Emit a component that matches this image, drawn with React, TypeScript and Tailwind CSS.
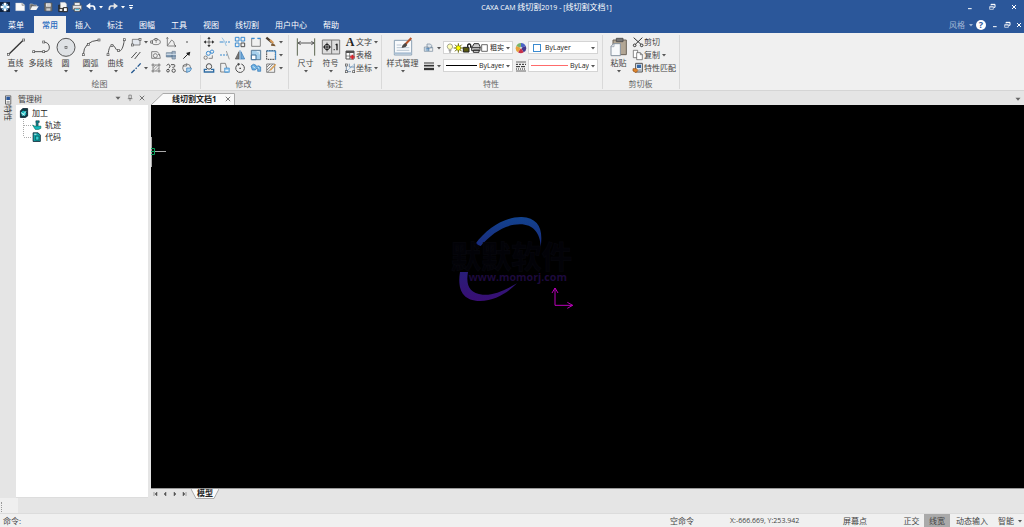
import type { ReactNode } from "react";

type IconProps = { children: ReactNode; className?: string };

// small ribbon icons, drawn on a 36 unit grid
function Icon({ children, className = "size-3" }: IconProps) {
  return (
    <svg
      viewBox="0 0 36 36"
      fill="none"
      stroke="#505050"
      strokeWidth="3"
      className={`shrink-0 ${className}`}
    >
      {children}
    </svg>
  );
}

// large ribbon icons, drawn on a 60 unit grid
function BigIcon({ children }: { children: ReactNode }) {
  return (
    <svg
      viewBox="0 0 60 60"
      fill="none"
      stroke="#555"
      strokeWidth="3"
      className="size-5 shrink-0"
    >
      {children}
    </svg>
  );
}

function Arrow({ className = "fill-[#555]" }: { className?: string }) {
  return (
    <svg viewBox="0 0 8 8" className={`size-2 shrink-0 ${className}`}>
      <path d="M2 3h4L4 5.4z" />
    </svg>
  );
}

function BigButton({
  label,
  icon,
  arrow = true,
  className = "w-[25px]",
}: {
  label: string;
  icon: ReactNode;
  arrow?: boolean;
  className?: string;
}) {
  return (
    <button
      className={`flex shrink-0 flex-col items-center whitespace-nowrap pt-0.5 ${className}`}
    >
      {icon}
      <span className="mt-px leading-[9px]">{label}</span>
      {arrow && <Arrow />}
    </button>
  );
}

function IconButton({ label, children }: { label: string; children: ReactNode }) {
  return (
    <button aria-label={label} className="flex items-center">
      {children}
    </button>
  );
}

function TextButton({
  label,
  icon,
  arrow,
}: {
  label: string;
  icon: ReactNode;
  arrow?: boolean;
}) {
  return (
    <button className="flex items-center whitespace-nowrap">
      {icon}
      <span>{label}</span>
      {arrow && <Arrow />}
    </button>
  );
}

function Group({
  title,
  children,
  className,
}: {
  title: string;
  children: ReactNode;
  className: string;
}) {
  return (
    <section
      className={`mb-px mt-0.5 flex shrink-0 flex-col justify-between border-r border-[#d9d9d9] ${className}`}
    >
      <div className="flex items-start">{children}</div>
      <h2 className="pr-1 text-center leading-[11px] text-[#666]">{title}</h2>
    </section>
  );
}

function Combo({
  label,
  value,
  children,
}: {
  label: string;
  value: string;
  children: ReactNode;
}) {
  return (
    <div className="flex h-[13px] w-[70px] items-center border border-[#d4d4d4] bg-white pl-0.5">
      {children}
      <select
        aria-label={label}
        className="ml-0.5 min-w-0 flex-1 appearance-none overflow-hidden bg-transparent text-[7px] leading-[10px] text-[#222]"
      >
        <option>{value}</option>
      </select>
      <Arrow />
    </div>
  );
}

const node = (x: number, y: number) => (
  <rect x={x - 3} y={y - 3} width="6" height="6" strokeWidth="2" fill="#f0f0f0" />
);

function TitleBar() {
  return (
    <header className="flex h-4 items-center bg-[#2b579a] pb-[3px] text-white">
      <div className="flex flex-1 items-center">
        <svg viewBox="0 0 30 30" className="size-2.5">
          <rect width="30" height="30" fill="#0d2140" />
          <path d="M15 2v26M2 15h26" stroke="#fff" strokeWidth="8" />
          <path d="M7 7l16 16M23 7L7 23" stroke="#8fc7ea" strokeWidth="4" />
        </svg>
        <IconButton label="新建">
          <Icon className="ml-1 size-3">
            <path d="M5 6h20l7 6v17H5z" fill="#fafafa" stroke="#ccc" strokeWidth="1" />
            <path d="M24 6v7h8" fill="#ccc" stroke="#888" strokeWidth="2" />
          </Icon>
        </IconButton>
        <IconButton label="打开">
          <Icon className="ml-0.5 size-3">
            <path d="M6 26V9h8l3 3h9v4" stroke="#bbb" strokeWidth="2" fill="#666" />
            <path d="M7 27l5-11h20l-7 11z" fill="#f2f2f2" stroke="none" />
          </Icon>
        </IconButton>
        <IconButton label="保存">
          <Icon className="ml-0.5 size-3">
            <path d="M8 6h22v24H8z" fill="#777" stroke="#555" strokeWidth="2" />
            <path d="M12 7h14v10H12z" fill="#eee" stroke="none" />
            <path d="M13 22h12v7H13z" fill="#ccc" stroke="none" />
            <path d="M14 12h10" stroke="#999" strokeWidth="2" />
          </Icon>
        </IconButton>
        <IconButton label="另存为">
          <Icon className="ml-[3px] size-3">
            <path d="M5 12h19v20H5z" fill="#333" stroke="#222" strokeWidth="2" />
            <path d="M10 4h14l5 5v12H10z" fill="#f4f4f4" stroke="#999" strokeWidth="1" />
            <path d="M8 24h8v6H8z" fill="#ddd" stroke="none" />
            <path d="M19 20h12v12H19z" fill="#fff" stroke="#222" strokeWidth="3" />
          </Icon>
        </IconButton>
        <IconButton label="打印">
          <Icon className="ml-0.5 size-3">
            <path d="M10 5h17v9H10z" fill="#fff" stroke="#555" strokeWidth="2" />
            <path d="M5 13h27v13H5z" fill="#e8e8e8" stroke="#555" strokeWidth="2" />
            <path d="M10 22h17v9H10z" fill="#fff" stroke="#333" strokeWidth="2" />
            <path d="M13 26h11" stroke="#2fb1d6" />
          </Icon>
        </IconButton>
        <IconButton label="撤销">
          <Icon className="ml-0.5 size-3">
            <path d="M13 15h11q6 1 5 12" stroke="#fff" strokeWidth="5" />
            <path d="M3 15L16 5v20z" fill="#fff" stroke="none" />
          </Icon>
          <Arrow className="fill-white" />
        </IconButton>
        <IconButton label="重做">
          <Icon className="ml-0.5 size-3">
            <path d="M22 15H12q-6 1-5 12" stroke="#e6e6e6" strokeWidth="5" />
            <path d="M33 15L20 5v20z" fill="#e6e6e6" stroke="none" />
          </Icon>
          <Arrow className="fill-white" />
        </IconButton>
        <IconButton label="自定义快速访问工具栏">
          <svg viewBox="0 0 8 8" className="size-2 fill-white">
            <path d="M2 2h4v1H2zM2 4h4L4 6.4z" />
          </svg>
        </IconButton>
      </div>
      <h1 className="whitespace-nowrap pl-[74px] pt-px text-center text-[7px]">
        CAXA CAM <span className="text-[8px]">线切割</span>2019 - [
        <span className="text-[8px]">线切割文档</span>1]
      </h1>
      <div className="flex flex-1 items-center justify-end gap-3 pr-[5px]">
        <WindowButtons />
      </div>
    </header>
  );
}

function WindowButtons() {
  return (
    <>
      <IconButton label="最小化">
        <svg viewBox="0 0 30 30" className="size-2.5">
          <path d="M9 20h11" stroke="#fff" strokeWidth="3" />
        </svg>
      </IconButton>
      <IconButton label="还原">
        <svg viewBox="0 0 30 30" className="size-2.5" fill="none" stroke="#fff">
          <path d="M12 10V7h12v9h-4M12 8h12" strokeWidth="3" />
          <path d="M8 14h11v8H8zM8 15h11" strokeWidth="2" />
        </svg>
      </IconButton>
      <IconButton label="关闭">
        <svg viewBox="0 0 30 30" className="size-2.5" stroke="#fff">
          <path d="M9 9l12 12M21 9L9 21" strokeWidth="3" />
        </svg>
      </IconButton>
    </>
  );
}

const tabs = ["插入", "标注", "图幅", "工具", "视图", "线切割", "用户中心", "帮助"];

function MenuBar() {
  return (
    <nav className="flex h-[17px] items-stretch bg-[#2b579a] text-white">
      <button className="mr-0.5 px-2">菜单</button>
      <button className="mr-px bg-[#f0f0f0] px-2 font-medium text-[#2b6cc0]">
        常用
      </button>
      {tabs.map((tab) => (
        <button key={tab} className="whitespace-nowrap px-2">
          {tab}
        </button>
      ))}
      <div className="ml-auto flex items-center">
        <button className="flex items-center text-[#a3b7d6]">
          风格
          <span className="ml-0.5">
            <Arrow className="fill-[#a3b7d6]" />
          </span>
        </button>
        <button
          aria-label="帮助"
          className="ml-px mr-1 size-[10px] rounded-full bg-white text-[9px] font-bold leading-[10px] text-[#2b579a]"
        >
          ?
        </button>
        <div className="flex gap-0.5">
          <WindowButtons />
        </div>
      </div>
    </nav>
  );
}

function DrawGroup() {
  return (
    <Group title="绘图" className="w-[201px] pl-[3px]">
      <BigButton
        label="直线"
        icon={
          <BigIcon>
            <path d="M7 53L53 8" strokeWidth="4" stroke="#333" />
            {node(7, 52)}
            {node(53, 9)}
          </BigIcon>
        }
      />
      <BigButton
        label="多段线"
        arrow={false}
        icon={
          <BigIcon>
            <path d="M8 44h34q14-1 13-14T39 15" />
            {node(8, 44)}
            {node(38, 44)}
            {node(38, 15)}
          </BigIcon>
        }
      />
      <BigButton
        label="圆"
        icon={
          <BigIcon>
            <circle cx="30" cy="31" r="27" fill="#dfe2e5" />
            <rect x="27" y="28" width="6" height="6" strokeWidth="2" />
          </BigIcon>
        }
      />
      <BigButton
        label="圆弧"
        icon={
          <BigIcon>
            <path d="M7 53Q8 13 54 9" />
            {node(7, 53)}
            {node(22, 22)}
            {node(54, 9)}
          </BigIcon>
        }
      />
      <BigButton
        label="曲线"
        icon={
          <BigIcon>
            <path d="M6 53C10 20 20 18 28 33s22 16 27-25" />
            {node(6, 53)}
            {node(18, 26)}
            {node(37, 40)}
            {node(55, 8)}
          </BigIcon>
        }
      />
      <div className="ml-0.5 grid h-10 grid-cols-[20px_15px_16px_12px] grid-rows-3 items-center">
        <IconButton label="矩形">
          <Icon>
            <path d="M7 10h23v17H7z" fill="#e4e8ee" strokeWidth="2" />
            {node(7, 27)}
            {node(30, 10)}
          </Icon>
          <Arrow />
        </IconButton>
        <IconButton label="椭圆">
          <Icon>
            <ellipse cx="18" cy="18" rx="13" ry="8" strokeWidth="2" />
            {node(18, 10)}
            {node(5, 18)}
            <path d="M17 18h3" />
          </Icon>
        </IconButton>
        <IconButton label="坐标曲线">
          <Icon>
            <path d="M7 5v25h26M8 28L20 12q8 2 9 16" strokeWidth="2" />
            <path d="M4 8l3-4 3 4M29 27l4 3-4 3" strokeWidth="2" />
          </Icon>
        </IconButton>
        <IconButton label="点">
          <Icon>
            <path d="M16 18h4" strokeWidth="4" />
          </Icon>
        </IconButton>
        <IconButton label="平行线">
          <Icon>
            <path d="M4 27L20 9M14 30L31 9" />
          </Icon>
        </IconButton>
        <IconButton label="等距线">
          <Icon>
            <path d="M5 8h16q10 4 10 20H5z" strokeWidth="2" />
            <circle cx="16" cy="20" r="6" strokeWidth="2" />
            <path d="M24 15l5 5" strokeWidth="2" />
          </Icon>
        </IconButton>
        <IconButton label="孔轴">
          <Icon>
            <path d="M4 11h17v13H4zM21 7h10v23h-10z" fill="#9eb2c6" stroke="#6b7f92" strokeWidth="2" />
            <path d="M4 16h29" stroke="#d4e0ea" />
            <path d="M4 21h29" stroke="#3f668c" strokeWidth="2" />
          </Icon>
        </IconButton>
        <IconButton label="箭头">
          <Icon>
            <path d="M7 29L22 14" stroke="#222" />
            <path d="M28 8l-3 13-10-9z" fill="#222" stroke="none" />
          </Icon>
        </IconButton>
        <IconButton label="中心线">
          <Icon>
            <path d="M4 33l10-10M17 20l3-3M23 14l9-10" stroke="#24588f" strokeWidth="4" />
          </Icon>
          <Arrow />
        </IconButton>
        <IconButton label="剖面线">
          <Icon>
            <path d="M9 4v28M27 4v28M4 9h28M4 27h28" strokeWidth="2" />
            <path
              d="M10 17l7-7M10 25l15-15M18 26l8-8"
              stroke="#777"
              strokeWidth="2"
            />
          </Icon>
        </IconButton>
        <IconButton label="公式曲线">
          <Icon>
            <circle cx="9" cy="26" r="4" />
            <circle cx="26" cy="26" r="5" />
            <path d="M5 11q5-9 9-2t-3 9M18 8h10q5 8-6 8" />
          </Icon>
        </IconButton>
        <IconButton label="局部放大">
          <Icon>
            <circle cx="17" cy="18" r="12" strokeWidth="2" />
            <path d="M17 18h14v3q-2 9-14 10z" fill="#a8d2ee" stroke="#3275b5" strokeWidth="2" />
            <path d="M5 12h12v-7" strokeWidth="2" />
          </Icon>
        </IconButton>
      </div>
    </Group>
  );
}

function ModifyGroup() {
  return (
    <Group title="修改" className="w-[88px] pl-0.5">
      <div className="grid h-10 grid-cols-[16px_15px_16px_15px_20px] grid-rows-3 items-center">
        <IconButton label="平移">
          <Icon>
            <path d="M18 5v26M5 18h26" stroke="#333" strokeWidth="2" />
            <path
              d="M18 2l5 7H13zM18 34l5-7H13zM2 18l7-5v10zM34 18l-7-5v10z"
              fill="#333"
              stroke="none"
            />
          </Icon>
        </IconButton>
        <IconButton label="裁剪">
          <Icon>
            <path d="M2 18h12M20 18h4M27 18h6" stroke="#3b8bd0" />
            <path d="M9 5l8 12 5 13" stroke="#68a9dd" strokeWidth="2" />
          </Icon>
        </IconButton>
        <IconButton label="阵列">
          <Icon>
            <path d="M4 4h11v11H4zM21 4h11v11H21zM4 21h11v11H4z" stroke="#3b8bd0" />
            <path d="M21 21h11v11H21z" strokeWidth="3" />
          </Icon>
        </IconButton>
        <IconButton label="打断">
          <Icon>
            <path d="M12 8H5v23h26V8h-7" strokeWidth="2" />
            <path d="M4 7h10M22 7h10" stroke="#3b8bd0" strokeWidth="4" />
          </Icon>
        </IconButton>
        <IconButton label="删除">
          <Icon>
            <path d="M4 5l17 14" stroke="#4d4033" strokeWidth="7" />
            <path d="M15 12l10 9" stroke="#d79b5a" strokeWidth="6" />
            <path d="M19 23q8-4 13 8l-14-2z" fill="#7a5a36" stroke="none" />
          </Icon>
          <Arrow />
        </IconButton>
        <IconButton label="平移复制">
          <Icon>
            <circle cx="8" cy="26" r="5" strokeWidth="2" />
            <circle cx="16" cy="13" r="6" stroke="#3b8bd0" />
            <circle cx="27" cy="8" r="5" stroke="#3b8bd0" />
            <path d="M17 28h11v-9" strokeWidth="2" />
          </Icon>
        </IconButton>
        <IconButton label="延伸">
          <Icon>
            <path d="M3 18h6M12 18h6M21 18h4" stroke="#3b8bd0" />
            <path d="M22 6l9 25" stroke="#777" strokeWidth="2" />
          </Icon>
        </IconButton>
        <IconButton label="镜像">
          <Icon>
            <path d="M15 8v22H4z" fill="#777" strokeWidth="2" />
            <path d="M21 8v22h11z" fill="#78aeda" stroke="#3275b5" strokeWidth="2" />
            <path d="M18 3v30" stroke="#3b8bd0" strokeWidth="2" />
          </Icon>
        </IconButton>
        <IconButton label="缩放">
          <Icon>
            <path d="M4 4h28v28H4z" fill="#a6d0ec" stroke="#5d7f9a" />
            <path d="M4 18h14v14H4z" fill="#fff" stroke="#3b6d96" />
            <path d="M20 8h8v8" stroke="#fff" strokeWidth="2" />
          </Icon>
        </IconButton>
        <IconButton label="拉伸">
          <Icon>
            <path d="M5 5h26v26H5z" stroke="#444" strokeDasharray="5 2" />
            <path d="M4 6h28v26" stroke="#3b8bd0" />
          </Icon>
          <Arrow />
        </IconButton>
        <IconButton label="等距">
          <Icon>
            <path d="M10 14q0-9 8-9t8 9q0 5-5 7h-6q-5-2-5-7z" />
            <path d="M12 22H4v8h28v-8h-8" stroke="#2f6ca3" strokeWidth="4" />
          </Icon>
        </IconButton>
        <IconButton label="移动副本">
          <Icon>
            <path d="M5 4h14l8 26H5z" strokeWidth="2" />
            <path d="M17 18h14v13H17z" fill="#8fc5ea" stroke="#3b8bd0" strokeWidth="2" />
            <path d="M19 25h9" stroke="#fff" />
          </Icon>
        </IconButton>
        <IconButton label="旋转">
          <Icon>
            <path d="M12 7a13 13 0 1 0 10-1" strokeWidth="3" />
            <path d="M11 2l8 4-7 6z" fill="#444" stroke="none" />
            <path d="M16 19h5" strokeWidth="4" />
          </Icon>
        </IconButton>
        <IconButton label="合并">
          <Icon>
            <path
              d="M3 12q7-9 14-3l2 4q8-4 13 2v13h-9v-9q-6 0-7 5H7z"
              fill="#69aee0"
              stroke="#3275b5"
              strokeWidth="2"
            />
            <path d="M9 13l6 6M23 15l5 5" stroke="#e8f3fb" />
          </Icon>
        </IconButton>
        <IconButton label="编辑填充">
          <Icon>
            <path d="M5 6h24v25H5zM6 15l9-9M6 24L23 7M8 30L27 11" strokeWidth="2" />
            <path d="M16 25L32 7" stroke="#e0a04e" strokeWidth="4" />
          </Icon>
          <Arrow />
        </IconButton>
      </div>
    </Group>
  );
}

function DimensionGroup() {
  return (
    <Group title="标注" className="w-[93px] pl-1">
      <BigButton
        label="尺寸"
        icon={
          <BigIcon>
            <path d="M4 4v52M56 4v52" stroke="#5c6650" />
            <path d="M6 18h48M14 13l-8 5 8 5M46 13l8 5-8 5" stroke="#555" />
          </BigIcon>
        }
      />
      <BigButton
        label="符号"
        icon={
          <BigIcon>
            <path d="M4 9h52v42H4z" fill="#ddd" stroke="#777" />
            <path d="M32 9v42" stroke="#777" />
            <circle cx="18" cy="30" r="8" stroke="#222" />
            <path d="M18 17v26M6 30h24" stroke="#222" />
            <path d="M48 20v20M44 24l4-3M38 38h3" stroke="#222" strokeWidth="4" />
          </BigIcon>
        }
      />
      <div className="ml-px grid h-10 grid-rows-3 items-center">
        <TextButton
          label="文字"
          arrow
          icon={
            <span className="w-3 text-center font-[Liberation_Serif] text-[12px] font-bold leading-3 text-[#222]">
              A
            </span>
          }
        />
        <TextButton
          label="表格"
          icon={
            <Icon>
              <path d="M6 6h24v24H6z" fill="#fff" />
              <path d="M6 9h24" strokeWidth="6" />
              <path d="M6 21h24M17 12v18" strokeWidth="2" />
              <path d="M25 17v14M18 24h14" stroke="#d8232a" strokeWidth="5" />
            </Icon>
          }
        />
        <TextButton
          label="坐标"
          arrow
          icon={
            <Icon>
              <path d="M7 9v20h14M16 5v10h15M31 5v23" stroke="#4a6d92" strokeWidth="2" />
              <path d="M9 27L28 9" stroke="#3b8bd0" strokeWidth="2" strokeDasharray="4 2" />
              {node(7, 29)}
              {node(29, 29)}
              {node(7, 9)}
            </Icon>
          }
        />
      </div>
    </Group>
  );
}

function PropertyGroup() {
  return (
    <Group title="特性" className="w-[221px] pl-0.5">
      <BigButton
        className="w-[37px]"
        label="样式管理"
        icon={
          <BigIcon>
            <path d="M4 10h52v44H4z" fill="#f8fafc" stroke="#8ba0b4" />
            <path d="M4 49h52" stroke="#a9bfd3" strokeWidth="6" />
            <path d="M11 24h14M11 32h38M11 40h38" stroke="#9badbe" strokeWidth="2" />
            <path d="M55 3L35 24" stroke="#b5532a" strokeWidth="6" />
            <path d="M38 18l5 6q-5 10-17 8 2-11 12-14z" fill="#4d4a48" stroke="none" />
          </BigIcon>
        }
      />
      <div className="ml-0.5 mt-1.5 grid grid-cols-[20px_70px_15px_70px] gap-y-[5px]">
        <IconButton label="图层">
          <Icon>
            <path d="M12 6h10l4 4v8H12zM4 15h12v13H4z" fill="#dfe5ea" stroke="#71879b" strokeWidth="2" />
            <path d="M20 16h9v12H16" stroke="#71879b" strokeWidth="2" />
            <path d="M8 20h12M8 24h12" stroke="#3275b5" strokeWidth="2" />
          </Icon>
          <Arrow />
        </IconButton>
        <Combo label="当前图层" value="粗实线层">
          <svg viewBox="0 0 126 36" className="h-3 w-[42px] shrink-0" fill="none">
            <path
              d="M8 22q-8-8-2-14 6-5 12 0 5 7-2 14z"
              fill="#ffffb8"
              stroke="#777"
              strokeWidth="2"
            />
            <path d="M8 26h8M9 30h6" stroke="#555" strokeWidth="2" />
            <path
              d="M37 4v28M23 18h28M27 8l20 20M47 8L27 28"
              stroke="#666600"
              strokeWidth="3"
            />
            <circle cx="37" cy="18" r="7" fill="#ffff00" stroke="#777700" strokeWidth="2" />
            <path d="M52 16h17v14H52z" fill="#5a5a10" stroke="#222" strokeWidth="3" />
            <path d="M65 15V9q5-6 9 0v8" stroke="#222" strokeWidth="4" />
            <path d="M80 13l4-8h14l4 8v13H77V13z" fill="#ccc" stroke="#333" strokeWidth="3" />
            <path d="M77 17h27M82 24h17v7H82z" stroke="#333" strokeWidth="3" />
            <path d="M107 8h17v20h-17z" fill="#fff" stroke="#222" strokeWidth="2" />
          </svg>
        </Combo>
        <div className="flex items-center justify-center">
          <IconButton label="颜色">
            <Icon>
              <g stroke="none">
                <path d="M18 18V3a15 15 0 0 1 14 9z" fill="#4a62c8" />
                <path d="M18 18l14-6a15 15 0 0 1-6 19z" fill="#45388c" />
                <path d="M18 18l8 13a15 15 0 0 1-17 0z" fill="#c8324a" />
                <path d="M18 18L9 31A15 15 0 0 1 4 12z" fill="#e8a23c" />
                <path d="M18 18L4 12A15 15 0 0 1 18 3z" fill="#79b56a" />
                <circle cx="18" cy="17" r="3" fill="#ddd" />
              </g>
            </Icon>
          </IconButton>
        </div>
        <Combo label="颜色" value="ByLayer">
          <span className="ml-0.5 mr-0.5 size-2 shrink-0 border border-[#3b8bd0]" />
        </Combo>
        <IconButton label="线宽">
          <Icon>
            <path d="M3 9h30" strokeWidth="3" stroke="#333" />
            <path d="M3 17h30" strokeWidth="5" stroke="#333" />
            <path d="M3 27h30" strokeWidth="7" stroke="#333" />
          </Icon>
          <Arrow />
        </IconButton>
        <Combo label="线宽" value="ByLayer">
          <span className="h-px w-[31px] shrink-0 bg-black" />
        </Combo>
        <div className="flex items-center justify-center">
          <IconButton label="线型">
            <Icon>
              <g stroke="#222">
                <path d="M3 6h30" strokeWidth="2" />
                <path d="M3 13h30" strokeDasharray="6 3" />
                <path d="M3 20h30" strokeDasharray="12 3" />
                <path d="M3 27h30" strokeDasharray="3 3" />
                <path d="M3 33h30" strokeWidth="2" />
              </g>
            </Icon>
          </IconButton>
        </div>
        <Combo label="线型" value="ByLayer">
          <span className="h-px w-[37px] shrink-0 bg-[#ff6b6b]" />
        </Combo>
      </div>
    </Group>
  );
}

function ClipboardGroup() {
  return (
    <Group title="剪切板" className="w-[77px] pl-[3px]">
      <BigButton
        label="粘贴"
        icon={
          <BigIcon>
            <path d="M12 9h40v44H12z" fill="#b3a795" stroke="#6b6358" />
            <path d="M22 4h20v10H22z" fill="#777" stroke="#555" />
            <path d="M6 28l8-8h20v36H6z" fill="#f7f9fb" stroke="#8793a0" />
            <path d="M6 29h9v-9" stroke="#8793a0" strokeWidth="2" />
          </BigIcon>
        }
      />
      <div className="ml-px grid h-10 grid-rows-3 items-center">
        <TextButton
          label="剪切"
          icon={
            <Icon>
              <path d="M5 5l22 20M31 5L10 25" stroke="#333" />
              <circle cx="8" cy="28" r="4" stroke="#333" />
              <circle cx="29" cy="28" r="4" stroke="#333" />
            </Icon>
          }
        />
        <TextButton
          label="复制"
          arrow
          icon={
            <Icon>
              <path d="M4 4h13v22H4z" fill="#fff" strokeWidth="2" />
              <path d="M14 11h11l6 6v15H14z" fill="#fff" strokeWidth="2" />
              <path d="M25 11v6h6" strokeWidth="2" />
            </Icon>
          }
        />
        <TextButton
          label="特性匹配"
          icon={
            <Icon>
              <path d="M11 4h20v26H11z" fill="#e6eef7" />
              <path d="M15 8h12v10H15z" fill="#3568a5" stroke="none" />
              <path d="M3 20h10l5 5-6 7-9-5z" fill="#e0852c" stroke="#8b4b15" strokeWidth="2" />
              <path d="M19 24h9" strokeWidth="2" />
            </Icon>
          }
        />
      </div>
    </Group>
  );
}

function TreePanel() {
  return (
    <aside className="flex w-[132px] shrink-0 flex-col">
      <div className="flex h-[14px] items-center gap-1 px-0.5 text-[#444]">
        <h2 className="mr-auto pt-px">管理树</h2>
        <IconButton label="菜单">
          <Arrow className="scale-125 fill-[#666]" />
        </IconButton>
        <IconButton label="固定">
          <Icon className="size-2">
            <path d="M13 5h11v15H13zM8 21h21M18 21v11" stroke="#666" />
          </Icon>
        </IconButton>
        <IconButton label="关闭">
          <Icon className="size-2">
            <path d="M8 8l20 20M28 8L8 28" stroke="#666" strokeWidth="4" />
          </Icon>
        </IconButton>
      </div>
      <div className="flex-1 border-b border-[#ddd] bg-white pl-[3px] pt-0.5 text-[#222]">
        <div className="flex h-3 items-center">
          <Icon className="size-2.5">
            <path d="M5 10l9-8h17v27l-8 5H5z" fill="#0a3e44" stroke="#123" />
            <circle cx="17" cy="19" r="11" fill="#17b8bd" stroke="#123" />
            <path d="M7 16l15 11M12 27l13-15" stroke="#e8ffff" />
          </Icon>
          <span className="ml-[3px]">加工</span>
        </div>
        <ul className="ml-1">
          <li className="flex h-3 items-center">
            <svg viewBox="0 0 9 12" className="h-3 w-[9px]" stroke="#aaa">
              <path d="M.5 0v12M1 6.5h8" strokeDasharray="1 1" />
            </svg>
            <Icon className="size-2.5">
              <path d="M14 3h12v6h-4v12h-7V9h-1z" fill="#0a8b90" stroke="#123" strokeWidth="2" />
              <path d="M2 18l8 4h22v8l-8 4H12z" fill="#17b8bd" stroke="#065" strokeWidth="2" />
            </Icon>
            <span className="ml-[3px]">轨迹</span>
          </li>
          <li className="flex h-3 items-center">
            <svg viewBox="0 0 9 12" className="h-3 w-[9px]" stroke="#aaa">
              <path d="M.5 0v6M1 6.5h8" strokeDasharray="1 1" />
            </svg>
            <Icon className="size-2.5">
              <path d="M4 3h18l8 8v23H4z" fill="#0ea3a8" stroke="#123" />
              <path d="M13 15h12v14H13z" fill="#35d0d4" stroke="#033" strokeWidth="2" />
              <path d="M8 8h8" stroke="#fff" />
            </Icon>
            <span className="ml-[3px]">代码</span>
          </li>
        </ul>
      </div>
    </aside>
  );
}

function DrawingArea() {
  return (
    <div className="relative flex-1 overflow-hidden bg-black">
      {/* cursor at the left edge */}
      <svg viewBox="0 0 16 30" className="absolute left-0 top-8 h-[30px] w-4" fill="none">
        <path d="M.5 0v30" stroke="#aaa" />
        <path d="M4 14.5h11" stroke="#aaa" />
        <path d="M0 11.5h3.5v6H0M0 14.5h4" stroke="#0c9f5c" />
      </svg>
      <svg
        viewBox="0 0 510 360"
        className="absolute left-[279px] top-[95px] h-[120px] w-[170px]"
        fill="none"
      >
        <defs>
          <linearGradient id="swoosh" x1="0" y1="50" x2="0" y2="305" gradientUnits="userSpaceOnUse">
            <stop offset="0" stopColor="#12438f" />
            <stop offset="0.35" stopColor="#1a2b7c" />
            <stop offset="1" stopColor="#390e74" />
          </linearGradient>
        </defs>
        <path
          d="M136 132C170 85 225 50 275 51C325 54 340 85 332 140C331 100 310 73 270 73C225 73 185 100 152 138Z"
          fill="url(#swoosh)"
        />
        <path
          d="M90 216C82 265 95 302 150 303C195 302 230 280 261 250C225 271 190 287 158 284C118 280 107 255 114 216Z"
          fill="url(#swoosh)"
        />
        <text
          x="62"
          y="204"
          fontSize="91"
          fontWeight="700"
          fontFamily="'Noto Sans CJK SC', sans-serif"
          fill="#020207"
          stroke="#07070d"
          strokeWidth="2"
        >
          默默软件
        </text>
        <text
          x="116"
          y="243"
          fontSize="32"
          fontWeight="700"
          fontFamily="'Open Sans', sans-serif"
          fill="#1d0a3c"
        >
          www.momorj.com
        </text>
        <path
          d="M375 316V264M366 279l9-15 9 15M375 316h53M412 307l16 9-16 9"
          stroke="#b800b8"
          strokeWidth="3"
        />
      </svg>
    </div>
  );
}

const steps = ["M3 2v4M6 2L4 4l2 2z", "M5 2L3 4l2 2z", "M3 2l2 2-2 2z", "M2 2l2 2-2 2zM5 2v4"];
const stepNames = ["第一页", "上一页", "下一页", "最后一页"];

function Workspace() {
  return (
    <main className="flex min-w-0 flex-1 flex-col">
      <div className="flex h-[14px] items-end">
        <div className="relative flex h-3 w-[85px] items-center">
          <svg
            viewBox="0 0 85 12"
            className="absolute inset-0 h-3 w-[85px]"
            fill="#fafafa"
            stroke="#aaa"
          >
            <path d="M0 12L12 .5H83.5V12" />
          </svg>
          <button className="relative ml-[21px] whitespace-nowrap font-bold text-[#222]">
            线切割文档1
          </button>
          <button aria-label="关闭文档" className="relative ml-auto mr-1">
            <Icon className="size-2">
              <path d="M8 8l20 20M28 8L8 28" stroke="#666" strokeWidth="4" />
            </Icon>
          </button>
        </div>
        <button aria-label="文档列表" className="mb-0.5 ml-auto mr-0.5">
          <Arrow className="scale-125 fill-[#666]" />
        </button>
      </div>
      <DrawingArea />
      <div className="flex h-[10px] items-center border-t border-[#999]">
        {steps.map((d, i) => (
          <button key={d} aria-label={stepNames[i]} className="w-[10px]">
            <svg viewBox="0 0 8 8" className="size-2 fill-[#555] stroke-[#555] stroke-[0.5]">
              <path d={d} />
            </svg>
          </button>
        ))}
        <div className="relative h-[10px] w-7 text-center">
          <svg
            viewBox="0 0 28 10"
            className="absolute inset-0 h-[10px] w-7"
            fill="#fafafa"
            stroke="#aaa"
          >
            <path d="M0 0l5 9.5h18L28 0" />
          </svg>
          <button className="relative block w-full font-bold leading-[8px] text-[#222]">
            模型
          </button>
        </div>
      </div>
    </main>
  );
}

function StatusBar() {
  return (
    <footer className="flex h-[13px] items-center whitespace-nowrap bg-[#f0f0f0] text-[#444]">
      <label htmlFor="command" className="pl-[3px]">
        命令:
      </label>
      <input
        id="command"
        type="text"
        className="h-full min-w-0 flex-1 bg-transparent px-1 outline-none"
      />
      <span className="w-[60px]">空命令</span>
      <span className="w-[113px] text-[7px]">X:-666.669, Y:253.942</span>
      <span className="w-[56px]">屏幕点</span>
      <button className="h-full w-[25px] px-1">正交</button>
      <button className="h-full w-[26px] bg-[#aaa]">线宽</button>
      <button className="ml-0.5 h-full w-10 px-1">动态输入</button>
      <button className="flex h-full items-center pl-1.5">
        智能
        <span className="ml-0.5">
          <Arrow />
        </span>
      </button>
    </footer>
  );
}

export default function App() {
  return (
    <div className="flex min-h-screen flex-col bg-[#e5e5e5] font-['Open_Sans','Noto_Sans_CJK_SC',sans-serif] text-[8px] leading-[10px] text-[#444]">
      <TitleBar />
      <MenuBar />
      <div className="flex h-[58px] overflow-hidden border-b border-[#d5d5d5] bg-[#f0f0f0]">
        <DrawGroup />
        <ModifyGroup />
        <DimensionGroup />
        <PropertyGroup />
        <ClipboardGroup />
      </div>
      <div className="flex flex-1">
        <div className="w-4 shrink-0 pl-[3px]">
          <button className="mt-1 flex flex-col items-center text-[#333]">
            <Icon className="size-2.5">
              <path d="M9 3h19v30H9z" fill="#fff" />
              <path d="M12 6h13v12H12z" fill="#2b579a" stroke="none" />
              <path d="M13 23h11M13 28h11" strokeWidth="2" />
            </Icon>
            <span className="[text-orientation:sideways] [writing-mode:vertical-rl]">
              特性
            </span>
          </button>
        </div>
        <TreePanel />
        <div className="w-[3px] shrink-0" />
        <Workspace />
      </div>
      <div className="flex h-4 border-b border-[#dcdcdc]">
        <div className="w-[18px] bg-[#efefef] pt-1">
          <div className="ml-px h-2.5 border-l border-dotted border-[#999]" />
        </div>
      </div>
      <StatusBar />
    </div>
  );
}
